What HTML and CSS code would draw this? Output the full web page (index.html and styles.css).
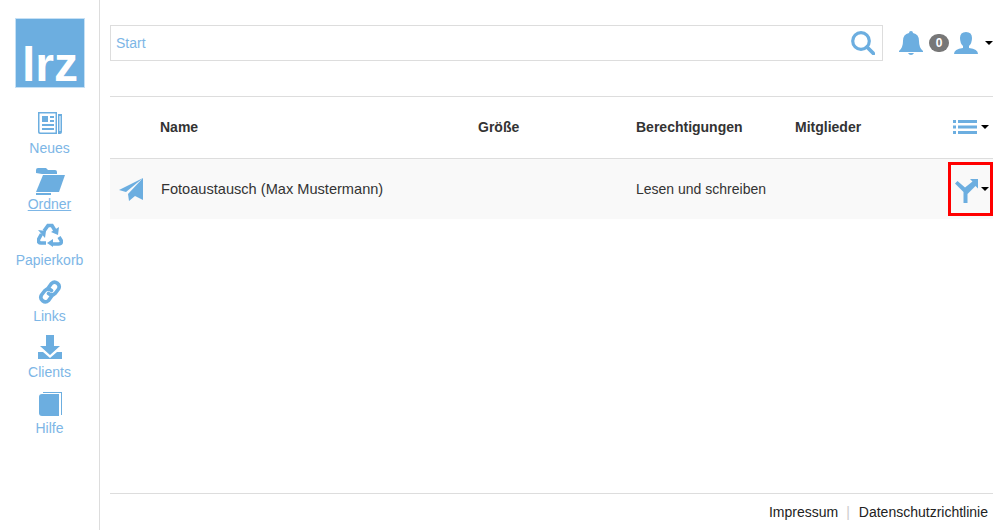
FILE: index.html
```html
<!DOCTYPE html>
<html lang="de">
<head>
  <meta charset="UTF-8" />
  <title>Dateien</title>
  <link rel="stylesheet" href="styles.css">
</head>
<body>
  <aside class="sidebar">
    <div class="logo">lrz</div>
    <nav class="nav">
      <a class="nav-item" href="#">
        <svg class="nav-icon" viewBox="0 0 26 24"><path d="M1 0h19v22H3a2 2 0 0 1-2-2z" fill="#6caee0"/><path d="M2.500 1.500h16v19H3.500a1 1 0 0 1-1-1z" fill="#fff"/><path d="M5 4h6v6H5zM13 4h4v2h-4zM13 8h4v2h-4zM5 12h12v2H5zM5 16h12v2H5z" fill="#6caee0"/><path d="M21 2h4v18a2 2 0 0 1-2 2h-2z" fill="#6caee0"/><path d="M22.500 4h1v15h-1z" fill="#fff"/></svg>
        <span>Neues</span>
      </a>
      <a class="nav-item active" href="#">
        <svg class="nav-icon folder" viewBox="0 0 30 27"><path d="M1 5V2q0-2 2-2h8l2 2h7q2 0 2 2v2H7z" fill="#6caee0"/><path d="M8 7h22l-6 17H1z" fill="#6caee0"/><path d="M1 25h15v2H1z" fill="#6caee0"/></svg>
        <span>Ordner</span>
      </a>
      <a class="nav-item" href="#">
        <svg class="nav-icon nudge" viewBox="0 0 26 24">
          <g fill="none" stroke="#6caee0" stroke-width="3.600">
            <path d="M7 8l4-5.500h4l3 5"/>
            <path d="M4.500 11l-3 5.500q-.5 3.500 2.500 3.500h5"/>
            <path d="M22 14l2.500 4q0 3-3 3H16"/>
          </g>
          <path d="M22 4l-1 8-7-3zM1 7l8 1-1 7zM16 16v8l-6-4z" fill="#6caee0"/>
        </svg>
        <span>Papierkorb</span>
      </a>
      <a class="nav-item" href="#">
        <svg class="nav-icon" viewBox="0 0 24 24"><g fill="none" stroke="#6caee0" stroke-width="3.600" stroke-linecap="round"><path d="M9.500 9l4-5.500a4.500 4.500 0 0 1 7 5.500l-3.500 4.500a4.500 4.500 0 0 1-6.500 0"/><path d="M14.500 15l-4 5.500a4.500 4.500 0 0 1-7-5.500l3.500-4.500a4.500 4.500 0 0 1 6.500 0"/></g></svg>
        <span>Links</span>
      </a>
      <a class="nav-item" href="#">
        <svg class="nav-icon nudge" viewBox="0 0 26 24"><path d="M9 0h8v11h6l-10 9-10-9h6z" fill="#6caee0"/><path d="M1 17h5l7 6 7-6h5v7H1z" fill="#6caee0"/></svg>
        <span>Clients</span>
      </a>
      <a class="nav-item" href="#">
        <svg class="nav-icon" viewBox="0 0 26 24"><path d="M6 0h19v23h-1V1H6z" fill="#6caee0"/><path d="M5 2h17v22H5q-3 0-3-3V5q0-3 3-3z" fill="#6caee0"/></svg>
        <span>Hilfe</span>
      </a>
    </nav>
  </aside>

  <main class="content">
    <header class="topbar">
      <div class="search">
        <input class="search-input" type="text" placeholder="Start">
        <svg class="search-icon" viewBox="0 0 24 24"><circle cx="10" cy="10" r="8.300" fill="none" stroke="#6caee0" stroke-width="3.200"/><path d="M16 16l6.500 6.500" stroke="#6caee0" stroke-width="3.800" stroke-linecap="round"/></svg>
      </div>
      <div class="tools">
        <svg class="bell" viewBox="0 0 24 24"><path d="M12 0q2 0 2 2 6 1 6 8 0 7 4 10v1H0v-1q4-3 4-10 0-7 6-8 0-2 2-2zM9 22h6q-1 2-3 2t-3-2z" fill="#6caee0"/></svg>
        <span class="badge">0</span>
        <svg class="user" viewBox="0 0 24 22"><path d="M12 0q6 0 6 6 0 5-3 8v2q9 1 9 6H0q0-5 9-6v-2q-3-3-3-8 0-6 6-6z" fill="#6caee0"/></svg>
        <span class="caret"></span>
      </div>
    </header>

    <section class="table">
      <div class="row head">
        <div class="col-icon"></div>
        <div class="col-name">Name</div>
        <div class="col-size">Größe</div>
        <div class="col-perm">Berechtigungen</div>
        <div class="col-members">Mitglieder</div>
        <div class="col-action">
          <svg class="list-icon" viewBox="0 0 24 14"><path d="M0 0h3v3H0zM5 0h19v3H5zM0 5.500h3v3H0zM5 5.500h19v3H5zM0 11h3v3H0zM5 11h19v3H5z" fill="#6caee0"/></svg>
          <span class="caret"></span>
        </div>
      </div>
      <div class="row item">
        <div class="col-icon">
          <svg class="send" viewBox="0 0 24 23"><path d="M24 0v22l-8-4-6 5-1-7L24 0 7 14 0 12z" fill="#6caee0"/></svg>
        </div>
        <div class="col-name">Fotoaustausch (Max Mustermann)</div>
        <div class="col-size"></div>
        <div class="col-perm">Lesen und schreiben</div>
        <div class="col-members"></div>
        <div class="col-action share">
          <svg class="fork" viewBox="0 0 24 24"><path d="M0 4.500L2.500 2l7.500 6.500 7.500-6L15 0h8v9.500l-2.500-2.500-8 8v9h-4V13z" fill="#6caee0"/></svg>
          <span class="caret"></span>
        </div>
      </div>
    </section>

    <footer class="footer">
      <a href="#">Impressum</a>
      <span class="sep">|</span>
      <a href="#">Datenschutzrichtlinie</a>
    </footer>
  </main>
</body>
</html>
```

FILE: styles.css
```css
* {
  box-sizing: border-box;
}

html, body {
  height: 100%;
}

body {
  margin: 0;
  display: flex;
  height: 530px;
  overflow: hidden;
  background: #fff;
  font-family: "Liberation Sans", Arial, sans-serif;
  font-size: 14px;
  color: #333;
}

a {
  text-decoration: none;
}

.sidebar {
  width: 100px;
  flex: none;
  border-right: 1px solid #ddd;
  padding-top: 19px;
}

.logo {
  width: 68px;
  height: 68px;
  margin-left: 16px;
  background: #6caee0;
  color: #fff;
  font-size: 48px;
  font-weight: bold;
  line-height: 68px;
  padding: 12px 0 0 6px;
  outline: 1px solid #c5e0f5;
  outline-offset: 0;
}

.nav {
  margin-top: 25px;
  display: flex;
  flex-direction: column;
}

.nav-item {
  height: 56px;
  display: flex;
  flex-direction: column;
  align-items: center;
  color: #7db6e6;
}

.nav-item.active span {
  text-decoration: underline;
}

.nav-icon {
  width: 26px;
  height: 24px;
  margin-bottom: 4px;
  flex: none;
}

.nav-icon.folder {
  width: 30px;
  height: 27px;
  margin-bottom: 1px;
}

.nav-icon.nudge {
  margin-top: -1px;
  margin-bottom: 5px;
}

.nav-item span {
  line-height: 16px;
}

.content {
  flex: 1;
  display: flex;
  flex-direction: column;
  padding: 25px 10px 0 10px;
  min-width: 0;
}

.topbar {
  display: flex;
  align-items: center;
  height: 36px;
  margin-bottom: 35px;
}

.search {
  width: 773px;
  height: 36px;
  border: 1px solid #ddd;
  display: flex;
  align-items: center;
  padding-left: 5px;
}

.search-input {
  flex: 1;
  border: 0;
  outline: 0;
  padding: 0;
  font: 14px "Liberation Sans", Arial, sans-serif;
  color: #7db6e6;
}

.search-input::placeholder {
  color: #7db6e6;
  opacity: 1;
}

.search-icon {
  width: 24px;
  height: 24px;
  margin-right: 7px;
}

.tools {
  display: flex;
  align-items: center;
  margin-left: 16px;
}

.bell {
  width: 24px;
  height: 24px;
}

.badge {
  width: 20px;
  height: 18px;
  margin-left: 6px;
  border-radius: 9px;
  background: #777;
  color: #fff;
  font-size: 12px;
  font-weight: bold;
  line-height: 18px;
  text-align: center;
}

.user {
  width: 24px;
  height: 22px;
  margin-left: 5px;
}

.caret {
  display: inline-block;
  width: 0;
  height: 0;
  border-top: 4px solid #000;
  border-left: 4px solid transparent;
  border-right: 4px solid transparent;
}

.tools .caret {
  margin-left: 7px;
}

.table {
  flex: none;
}

.row {
  display: flex;
  align-items: center;
}

.head {
  height: 63px;
  border-top: 1px solid #ddd;
  border-bottom: 1px solid #ddd;
  font-weight: bold;
  padding-bottom: 1px;
}

.item {
  height: 60px;
  background: #f9f9f9;
}

.col-icon {
  width: 50px;
  flex: none;
  display: flex;
  padding-left: 9px;
}

.col-name {
  width: 318px;
  flex: none;
}

.item .col-name {
  padding-left: 1px;
  font-size: 14.6px;
}

.col-size {
  width: 158px;
  flex: none;
}

.col-perm {
  width: 159px;
  flex: none;
}

.col-members {
  width: 153px;
  flex: none;
}

.col-action {
  display: flex;
  align-items: center;
  width: 45px;
  flex: none;
  padding-left: 5px;
}

.list-icon {
  width: 24px;
  height: 14px;
  margin-right: 4px;
}

.send {
  width: 24px;
  height: 23px;
}

.share {
  height: 54px;
  width: 45px;
  border: 3px solid #f00;
  padding-left: 4px;
}

.fork {
  width: 24px;
  height: 24px;
  margin-top: 3px;
  margin-right: 2px;
}

.footer {
  margin-top: 274px;
  height: 37px;
  border-top: 1px solid #ddd;
  display: flex;
  justify-content: flex-end;
  align-items: center;
  padding-right: 5px;
  padding-bottom: 1px;
}

.footer a {
  color: #222;
}

.sep {
  margin: 0 9px 0 8px;
  color: #ccc;
}
```
